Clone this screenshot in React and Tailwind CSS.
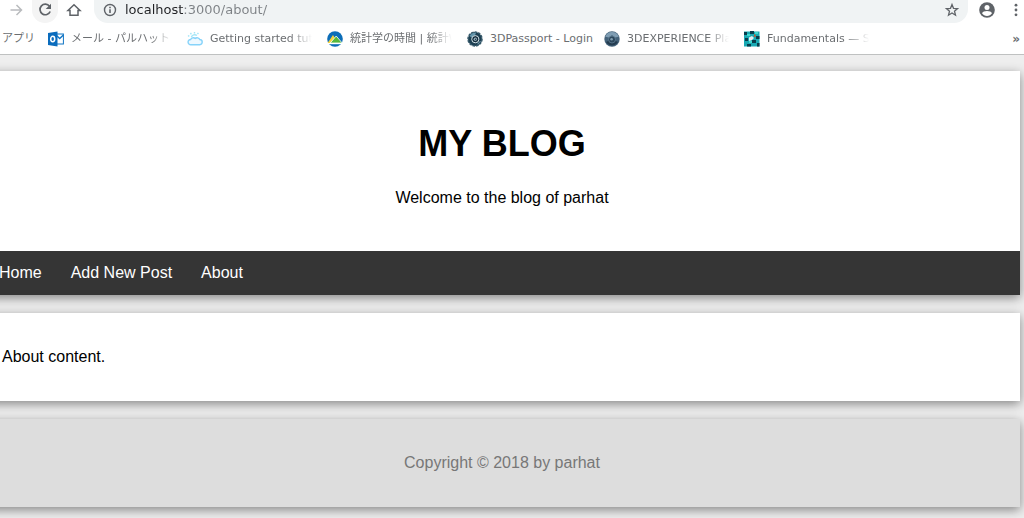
import React from "react"

function OutlookIcon() {
  return (
    <svg viewBox="0 0 16 16" className="size-4 shrink-0">
      <rect x="8" y="3" width="7.4" height="10" fill="#fff" stroke="#0f74c4" />
      <path d="M8.5 4.5l3.2 3 3.7-3.4" fill="none" stroke="#0f74c4" strokeWidth="1.4" />
      <path d="M0 2L9.5 0.6v14.8L0 14z" fill="#0a6cbd" />
      <ellipse cx="4.7" cy="8" rx="2" ry="2.7" fill="none" stroke="#fff" strokeWidth="1.5" />
    </svg>
  )
}

function CloudIcon() {
  return (
    <svg viewBox="0 0 16 16" className="size-4 shrink-0" fill="none" stroke="#86d3fa" strokeWidth="1.4">
      <path d="M3.800 13.700h8.600a2.600 2.600 0 0 0 .4-5.200 3 3 0 0 0-4.600-1.100A3 3 0 0 0 3.600 8.500a2.600 2.600 0 0 0 .2 5.200z" fill="#edf8ff" />
      <path d="M4.300 6.200a3.600 3.600 0 0 1 5.600-1.700M2.300 5.400L1 4.500M4.300 3.300l-.8-1.500M7.500 2.600V1M10.500 3.200l.9-1.300" stroke="#a4e6f7" />
    </svg>
  )
}

function StatsIcon() {
  return (
    <svg viewBox="0 0 16 16" className="size-4 shrink-0">
      <circle cx="8" cy="8" r="7.8" fill="#0c6db8" />
      <path d="M.6 12L6 4l5 8z" fill="#f7d23b" />
      <path d="M3.200 12L9.200 5l6 7z" fill="#57b83c" stroke="#fff" strokeWidth=".8" />
      <path d="M1 12h14v1.200H1z" fill="#fff" />
    </svg>
  )
}

function PassportIcon() {
  return (
    <svg viewBox="0 0 16 16" className="size-4 shrink-0">
      <circle cx="8" cy="8" r="7" fill="#1d3f52" stroke="#36596b" strokeWidth="1.5" strokeDasharray="2.6 1" />
      <path d="M2.5 5A6.5 6.5 0 0 1 9 1.7l-1 2.8-3.4 2z" fill="#6597ad" />
      <circle cx="8.3" cy="8.2" r="3.6" fill="#122b3b" stroke="#d5e3e9" />
      <circle cx="8.3" cy="8.2" r="1.6" fill="#a9c3cf" />
      <path d="M7.8 7.2l1.8 1-1.8 1z" fill="#122b3b" />
      <path d="M10.5 13.3l3-3.2" stroke="#7ea6b8" />
    </svg>
  )
}

function ExperienceIcon() {
  return (
    <svg viewBox="0 0 16 16" className="size-4 shrink-0">
      <circle cx="8" cy="8" r="7.7" fill="#44627a" />
      <path d="M1.2 5.8A7.2 7.2 0 0 1 14.8 5.8L11 6.5 8 4 5 6.5z" fill="#7f9db3" />
      <path d="M2 11l3-1.500L8 12l3-2.500L14 11a7 7 0 0 1-12 0z" fill="#243c50" />
      <circle cx="8" cy="8.500" r="3.500" fill="#2d485d" stroke="#6f8da3" strokeWidth=".6" />
      <circle cx="7.600" cy="8.300" r="1.300" fill="#7f9bae" />
    </svg>
  )
}

function MosaicIcon() {
  return (
    <svg viewBox="0 0 16 16" className="size-4 shrink-0">
      <path d="M0 .5h15.5v15H0z" fill="#18a9b3" />
      <path d="M0 1h3v3H0zM6 0h4v3H6zM12 5h3.5v3H12zM1 7h3v3H1zM8 9h4v3H8zM3 13h4v2.5H3zM13 12h2.5v3.5H13z" fill="#073d4c" />
      <path d="M3 3h3v2H3zM11 1h3v2h-3zM5 10h3v2H5z" fill="#3fd9cf" />
      <path d="M5 6.500l3-1.500 2 2-2 2-3 1z" fill="#e9eef2" />
      <path d="M10 3.500h1.500V6H10z" fill="#c9562c" />
    </svg>
  )
}

const bookmarks = [
  { label: "メール - パルハット", icon: OutlookIcon, width: "w-[101px]", fade: true },
  { label: "Getting started tuto", icon: CloudIcon, width: "w-[102px]", fade: true },
  { label: "統計学の時間 | 統計W", icon: StatsIcon, width: "w-[102px]", fade: true },
  { label: "3DPassport - Login", icon: PassportIcon, width: "w-[99px]", fade: false },
  { label: "3DEXPERIENCE Pla", icon: ExperienceIcon, width: "w-[102px]", fade: true },
  { label: "Fundamentals — Sc", icon: MosaicIcon, width: "w-[102px]", fade: true },
]

function Toolbar() {
  return (
    <div className="flex h-[23px] items-center bg-white pl-1 text-[#5f6368]">
      <button aria-label="Forward" className="flex size-6 items-center justify-center pb-1 text-[#b9bbbe]">
        <svg viewBox="0 0 16 16" className="size-4" fill="none" stroke="currentColor" strokeWidth="1.5">
          <path d="M2.500 8h11M8.500 3L13.500 8l-5 5" />
        </svg>
      </button>
      <button aria-label="Reload" className="ml-1 flex h-[23px] w-[26px] items-center justify-center rounded-b-full bg-[#f4f4f4] pb-1">
        <svg viewBox="0 0 16 16" className="size-4" fill="none" stroke="currentColor" strokeWidth="1.700">
          <path d="M12.500 4.200A5.300 5.300 0 1 0 13.200 9.500" />
          <path d="M14 1.700v5.300H8.700z" fill="currentColor" stroke="none" />
        </svg>
      </button>
      <button aria-label="Home page" className="ml-1 flex size-6 items-center justify-center pb-1">
        <svg viewBox="0 0 16 16" className="size-4" fill="none" stroke="currentColor" strokeWidth="1.500">
          <path d="M2 8.500h2V13.200h8V8.500h2L8 2.800z" />
        </svg>
      </button>
      <div className="ml-2 flex h-[23px] flex-1 items-center rounded-b-[14px] bg-[#f0f3f4] pr-2 pb-1 pl-2">
        <svg viewBox="0 0 16 16" className="size-4" fill="none" stroke="currentColor" strokeWidth="1.400">
          <circle cx="8" cy="8" r="5.500" />
          <path d="M8 7.200v3.800M8 4.800v1.400" strokeWidth="1.600" />
        </svg>
        <input
          aria-label="Address"
          defaultValue="localhost:3000/about/"
          className="ml-[7px] h-5 min-w-0 flex-1 bg-[linear-gradient(to_right,#202124_59px,#7d8185_59px)] bg-clip-text text-[13px] leading-5 text-transparent outline-none"
        />
        <button aria-label="Bookmark this page">
          <svg viewBox="0 0 16 16" className="size-4" fill="none" stroke="currentColor" strokeWidth="1.300">
            <path d="M8 2.500l1.500 3.800 4.100.3-3.100 2.600 1 4L8 11l-3.500 2.200 1-4-3.100-2.600 4.100-.3z" />
          </svg>
        </button>
      </div>
      <button aria-label="Profile" className="ml-[7px] flex size-6 items-center justify-center pb-1">
        <svg viewBox="0 0 16 16" className="size-4">
          <circle cx="8" cy="8" r="7.800" fill="#5f6368" />
          <circle cx="8" cy="5.400" r="2.500" fill="#fff" />
          <path d="M3 11.200c1-3 9-3 10 0a6 6 0 0 1-10 0z" fill="#fff" />
        </svg>
      </button>
      <button aria-label="Menu" className="ml-[9px] flex h-6 w-4 items-center justify-center pb-1">
        <svg viewBox="0 0 16 16" className="size-4" fill="currentColor">
          <circle cx="8" cy="3.200" r="1.400" />
          <circle cx="8" cy="8" r="1.400" />
          <circle cx="8" cy="12.800" r="1.400" />
        </svg>
      </button>
    </div>
  )
}

function BookmarksBar() {
  return (
    <div className="flex h-8 items-center border-b border-[#bfc1c1] bg-white pr-1 pl-0.5 text-[11px] text-[#6b6e71]">
      <a href="#apps" className="w-[46px] shrink-0 whitespace-nowrap">アプリ</a>
      <div className="flex min-w-0 flex-1 gap-[15px] overflow-hidden">
        {bookmarks.map(({ label, icon: Icon, width, fade }) => (
          <a key={label} href="#bookmark" className="flex shrink-0 items-center gap-[7px]">
            <Icon />
            <span
              className={`whitespace-nowrap ${width} ${
                fade ? "[mask-image:linear-gradient(to_right,black_78%,transparent)]" : ""
              }`}
            >
              {label}
            </span>
          </a>
        ))}
      </div>
      <button aria-label="More bookmarks" className="text-xs font-bold">»</button>
    </div>
  )
}

export default function App() {
  return (
    <div className="min-h-screen overflow-hidden bg-[#eeeeee] font-['Liberation_Sans',sans-serif] text-base leading-6 text-black">
      <div className="font-['DejaVu_Sans','Noto_Sans_CJK_JP',sans-serif]">
        <Toolbar />
        <BookmarksBar />
      </div>

      <div className="mt-4 mr-1 mb-3 -ml-4 space-y-[18px]">
        <div className="shadow-[0_3px_10px_#00000070]">
          <header className="bg-white px-4 pt-[49px] pb-[41px] text-center">
            <h1 className="text-4xl leading-12 font-bold">MY BLOG</h1>
            <p className="mt-[18px]">Welcome to the blog of parhat</p>
          </header>
          <nav className="flex gap-[29px] bg-[#353535] px-[15px] py-[10px] text-white">
            <a href="#home">Home</a>
            <a href="#new">Add New Post</a>
            <a href="#about">About</a>
          </nav>
        </div>

        <main className="bg-white px-[18px] py-8 shadow-[0_3px_10px_#00000070]">
          <p>About content.</p>
        </main>

        <footer className="bg-[#dddddd] px-[18px] py-8 text-center text-[#777777] shadow-[0_3px_10px_#00000070]">
          <p>Copyright © 2018 by parhat</p>
        </footer>
      </div>
    </div>
  )
}
